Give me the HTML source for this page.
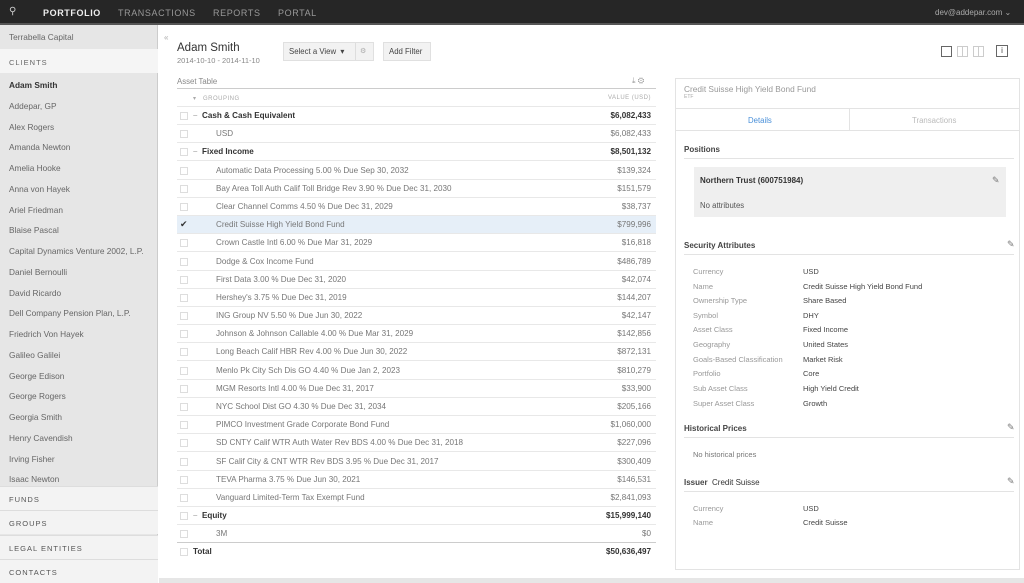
<!DOCTYPE html>
<html><head><meta charset="utf-8"><style>
*{box-sizing:border-box;margin:0;padding:0}
body{width:1024px;height:583px;overflow:hidden;font-family:"Liberation Sans",sans-serif;background:#fff;position:relative;color:#333}
.a{position:absolute;white-space:nowrap}
.nav{left:0;top:0;width:1024px;height:25px;background:#262626;border-bottom:2px solid #555}
.nav span{position:absolute;top:8px;font-size:9px;letter-spacing:.6px;color:#999}
.side{left:0;top:25px;width:158px;height:558px;background:#e6e6e6;border-right:1px solid #ccc}
.cl{left:9px;font-size:8.3px;color:#666}
.sec{left:0;width:158px;height:24px;background:#f3f3f3;border-top:1px solid #ddd;font-size:7.5px;letter-spacing:1px;color:#555;padding:8px 9px}
.row{left:177px;width:479px;height:18px;border-bottom:1px solid #e8e8e8;font-size:8.1px;color:#777}
.row .cb{position:absolute;left:3px;top:5px;width:8px;height:8px;border:1px solid #ddd;background:#fff}
.row .t{position:absolute;top:4px}
.row .v{position:absolute;right:5px;top:4px}
.b{font-weight:bold;color:#333}
.lbl{left:693px;font-size:7.5px;color:#999}
.val{left:803px;font-size:7.5px;color:#444}
.h{left:684px;font-size:8px;font-weight:bold;color:#444}
.hl{left:684px;width:330px;height:1px;background:#e3e3e3}
.pen{font-size:9px;color:#777}
</style></head><body>
<div class="a nav">
<span style="left:9px;top:6px;color:#ccc;font-size:10px">&#9906;</span>
<span style="left:43px;color:#eee;font-weight:bold">PORTFOLIO</span>
<span style="left:118px">TRANSACTIONS</span>
<span style="left:213px">REPORTS</span>
<span style="left:278px">PORTAL</span>
<span style="left:935px;letter-spacing:0;font-size:8px;color:#aaa">dev@addepar.com ⌄</span>
</div>
<div class="a side"></div>
<div class="a cl" style="top:32px">Terrabella Capital</div>
<div class="a" style="left:0;top:49px;width:158px;height:24px;background:#f5f5f5"></div>
<div class="a cl" style="top:58px;font-size:7.5px;letter-spacing:1px">CLIENTS</div>
<div class="a cl" style="top:80px;font-weight:bold;color:#333">Adam Smith</div>
<div class="a cl" style="top:101px">Addepar, GP</div>
<div class="a cl" style="top:122px">Alex Rogers</div>
<div class="a cl" style="top:142px">Amanda Newton</div>
<div class="a cl" style="top:163px">Amelia Hooke</div>
<div class="a cl" style="top:184px">Anna von Hayek</div>
<div class="a cl" style="top:205px">Ariel Friedman</div>
<div class="a cl" style="top:225px">Blaise Pascal</div>
<div class="a cl" style="top:246px">Capital Dynamics Venture 2002, L.P.</div>
<div class="a cl" style="top:267px">Daniel Bernoulli</div>
<div class="a cl" style="top:288px">David Ricardo</div>
<div class="a cl" style="top:308px">Dell Company Pension Plan, L.P.</div>
<div class="a cl" style="top:329px">Friedrich Von Hayek</div>
<div class="a cl" style="top:350px">Galileo Galilei</div>
<div class="a cl" style="top:371px">George Edison</div>
<div class="a cl" style="top:391px">George Rogers</div>
<div class="a cl" style="top:412px">Georgia Smith</div>
<div class="a cl" style="top:433px">Henry Cavendish</div>
<div class="a cl" style="top:454px">Irving Fisher</div>
<div class="a cl" style="top:474px">Isaac Newton</div>
<div class="a sec" style="top:486px">FUNDS</div>
<div class="a sec" style="top:510px">GROUPS</div>
<div class="a sec" style="top:535px">LEGAL ENTITIES</div>
<div class="a sec" style="top:559px;height:24px">CONTACTS</div>
<div class="a" style="left:159px;top:578px;width:865px;height:5px;background:#e6e6e6"></div>

<div class="a" style="left:164px;top:33px;font-size:8px;color:#aaa">«</div>
<div class="a" style="left:177px;top:42px;font-size:11.5px;color:#333">Adam Smith</div>
<div class="a" style="left:177px;top:56px;font-size:7.5px;color:#888">2014-10-10 - 2014-11-10</div>
<div class="a" style="left:283px;top:42px;width:91px;height:19px;background:#f2f2f2;border:1px solid #e0e0e0"></div>
<div class="a" style="left:289px;top:47px;font-size:7.8px;color:#444">Select a View &nbsp;▾</div>
<div class="a" style="left:355px;top:43px;width:1px;height:17px;background:#ddd"></div>
<div class="a" style="left:360px;top:47px;font-size:7px;color:#aaa">⚙</div>
<div class="a" style="left:383px;top:42px;width:48px;height:19px;background:#f2f2f2;border:1px solid #e0e0e0"></div>
<div class="a" style="left:389px;top:47px;font-size:7.8px;color:#444">Add Filter</div>
<div class="a" style="left:941px;top:46px;width:11px;height:11px;border:1.5px solid #666"></div>
<div class="a" style="left:957px;top:46px;width:11px;height:11px;border:1px solid #ccc;background:linear-gradient(90deg,transparent 4px,#ccc 4px,#ccc 5px,transparent 5px)"></div>
<div class="a" style="left:973px;top:46px;width:11px;height:11px;border:1px solid #ccc;background:linear-gradient(90deg,transparent 4px,#ccc 4px,#ccc 5px,transparent 5px)"></div>
<div class="a" style="left:996px;top:45px;width:12px;height:12px;border:1.5px solid #666;font-size:8px;text-align:center;line-height:9px;color:#444">i</div>

<div class="a" style="left:177px;top:77px;font-size:7.8px;color:#888">Asset Table</div>
<div class="a" style="left:632px;top:76px;font-size:8px;color:#999">⤓ ⚙</div>
<div class="a" style="left:177px;top:88px;width:479px;height:1px;background:#ccc"></div>
<div class="a row" style="top:89px;height:18px"><span class="t" style="left:16px;font-size:6px;color:#aaa;letter-spacing:.5px;top:6px">▾ &nbsp; GROUPING</span><span class="v" style="font-size:6px;color:#aaa;letter-spacing:.5px;top:6px">VALUE (USD)</span></div>
<div class="a row" style="top:107px"><span class="cb"></span><span class="t b" style="left:16px"><span style="color:#bbb">–</span> &nbsp;Cash &amp; Cash Equivalent</span><span class="v b">$6,082,433</span></div>
<div class="a row" style="top:125px"><span class="cb"></span><span class="t" style="left:39px">USD</span><span class="v">$6,082,433</span></div>
<div class="a row" style="top:143px"><span class="cb"></span><span class="t b" style="left:16px"><span style="color:#bbb">–</span> &nbsp;Fixed Income</span><span class="v b">$8,501,132</span></div>
<div class="a row" style="top:162px"><span class="cb"></span><span class="t" style="left:39px">Automatic Data Processing 5.00 % Due Sep 30, 2032</span><span class="v">$139,324</span></div>
<div class="a row" style="top:180px"><span class="cb"></span><span class="t" style="left:39px">Bay Area Toll Auth Calif Toll Bridge Rev 3.90 % Due Dec 31, 2030</span><span class="v">$151,579</span></div>
<div class="a row" style="top:198px"><span class="cb"></span><span class="t" style="left:39px">Clear Channel Comms 4.50 % Due Dec 31, 2029</span><span class="v">$38,737</span></div>
<div class="a row" style="top:216px;background:#e6eff8"><span class="t" style="left:3px;color:#333;top:3px;font-size:9px">✔</span><span class="t" style="left:39px">Credit Suisse High Yield Bond Fund</span><span class="v">$799,996</span></div>
<div class="a row" style="top:234px"><span class="cb"></span><span class="t" style="left:39px">Crown Castle Intl 6.00 % Due Mar 31, 2029</span><span class="v">$16,818</span></div>
<div class="a row" style="top:253px"><span class="cb"></span><span class="t" style="left:39px">Dodge &amp; Cox Income Fund</span><span class="v">$486,789</span></div>
<div class="a row" style="top:271px"><span class="cb"></span><span class="t" style="left:39px">First Data 3.00 % Due Dec 31, 2020</span><span class="v">$42,074</span></div>
<div class="a row" style="top:289px"><span class="cb"></span><span class="t" style="left:39px">Hershey's 3.75 % Due Dec 31, 2019</span><span class="v">$144,207</span></div>
<div class="a row" style="top:307px"><span class="cb"></span><span class="t" style="left:39px">ING Group NV 5.50 % Due Jun 30, 2022</span><span class="v">$42,147</span></div>
<div class="a row" style="top:325px"><span class="cb"></span><span class="t" style="left:39px">Johnson &amp; Johnson Callable 4.00 % Due Mar 31, 2029</span><span class="v">$142,856</span></div>
<div class="a row" style="top:343px"><span class="cb"></span><span class="t" style="left:39px">Long Beach Calif HBR Rev 4.00 % Due Jun 30, 2022</span><span class="v">$872,131</span></div>
<div class="a row" style="top:362px"><span class="cb"></span><span class="t" style="left:39px">Menlo Pk City Sch Dis GO 4.40 % Due Jan 2, 2023</span><span class="v">$810,279</span></div>
<div class="a row" style="top:380px"><span class="cb"></span><span class="t" style="left:39px">MGM Resorts Intl 4.00 % Due Dec 31, 2017</span><span class="v">$33,900</span></div>
<div class="a row" style="top:398px"><span class="cb"></span><span class="t" style="left:39px">NYC School Dist GO 4.30 % Due Dec 31, 2034</span><span class="v">$205,166</span></div>
<div class="a row" style="top:416px"><span class="cb"></span><span class="t" style="left:39px">PIMCO Investment Grade Corporate Bond Fund</span><span class="v">$1,060,000</span></div>
<div class="a row" style="top:434px"><span class="cb"></span><span class="t" style="left:39px">SD CNTY Calif WTR Auth Water Rev BDS 4.00 % Due Dec 31, 2018</span><span class="v">$227,096</span></div>
<div class="a row" style="top:453px"><span class="cb"></span><span class="t" style="left:39px">SF Calif City &amp; CNT WTR Rev BDS 3.95 % Due Dec 31, 2017</span><span class="v">$300,409</span></div>
<div class="a row" style="top:471px"><span class="cb"></span><span class="t" style="left:39px">TEVA Pharma 3.75 % Due Jun 30, 2021</span><span class="v">$146,531</span></div>
<div class="a row" style="top:489px"><span class="cb"></span><span class="t" style="left:39px">Vanguard Limited-Term Tax Exempt Fund</span><span class="v">$2,841,093</span></div>
<div class="a row" style="top:507px"><span class="cb"></span><span class="t b" style="left:16px"><span style="color:#bbb">–</span> &nbsp;Equity</span><span class="v b">$15,999,140</span></div>
<div class="a row" style="top:525px;border-bottom:1px solid #ccc"><span class="cb"></span><span class="t" style="left:39px">3M</span><span class="v">$0</span></div>
<div class="a row" style="top:543px;border:none"><span class="cb"></span><span class="t b" style="left:16px">Total</span><span class="v b">$50,636,497</span></div>

<div class="a" style="left:675px;top:78px;width:345px;height:492px;border:1px solid #e3e3e3"></div>
<div class="a" style="left:684px;top:84px;font-size:8.3px;color:#999">Credit Suisse High Yield Bond Fund</div>
<div class="a" style="left:684px;top:94px;font-size:5px;color:#aaa">ETF</div>
<div class="a" style="left:675px;top:108px;width:345px;height:23px;border-top:1px solid #e3e3e3;border-bottom:1px solid #e3e3e3"></div>
<div class="a" style="left:849px;top:109px;width:1px;height:21px;background:#e3e3e3"></div>
<div class="a" style="left:748px;top:116px;font-size:7.8px;color:#4a90d9">Details</div>
<div class="a" style="left:912px;top:116px;font-size:7.8px;color:#bbb">Transactions</div>
<div class="a h" style="top:145px">Positions</div>
<div class="a hl" style="top:158px"></div>
<div class="a" style="left:694px;top:167px;width:312px;height:50px;background:#efefef"></div>
<div class="a" style="left:700px;top:176px;font-size:8px;font-weight:bold;color:#333">Northern Trust (600751984)</div>
<div class="a pen" style="left:992px;top:175px">✎</div>
<div class="a" style="left:700px;top:201px;font-size:7.8px;color:#555">No attributes</div>
<div class="a h" style="top:241px">Security Attributes</div><div class="a pen" style="left:1007px;top:239px">✎</div>
<div class="a hl" style="top:254px"></div>
<div class="a lbl" style="top:267px">Currency</div><div class="a val" style="top:267px">USD</div>
<div class="a lbl" style="top:282px">Name</div><div class="a val" style="top:282px">Credit Suisse High Yield Bond Fund</div>
<div class="a lbl" style="top:296px">Ownership Type</div><div class="a val" style="top:296px">Share Based</div>
<div class="a lbl" style="top:311px">Symbol</div><div class="a val" style="top:311px">DHY</div>
<div class="a lbl" style="top:325px">Asset Class</div><div class="a val" style="top:325px">Fixed Income</div>
<div class="a lbl" style="top:340px">Geography</div><div class="a val" style="top:340px">United States</div>
<div class="a lbl" style="top:355px">Goals-Based Classification</div><div class="a val" style="top:355px">Market Risk</div>
<div class="a lbl" style="top:369px">Portfolio</div><div class="a val" style="top:369px">Core</div>
<div class="a lbl" style="top:384px">Sub Asset Class</div><div class="a val" style="top:384px">High Yield Credit</div>
<div class="a lbl" style="top:399px">Super Asset Class</div><div class="a val" style="top:399px">Growth</div>
<div class="a h" style="top:424px">Historical Prices</div><div class="a pen" style="left:1007px;top:422px">✎</div>
<div class="a hl" style="top:437px"></div>
<div class="a lbl" style="top:450px;color:#777">No historical prices</div>
<div class="a h" style="top:478px">Issuer &nbsp;<span style="font-weight:normal;color:#333">Credit Suisse</span></div><div class="a pen" style="left:1007px;top:476px">✎</div>
<div class="a hl" style="top:491px"></div>
<div class="a lbl" style="top:504px">Currency</div><div class="a val" style="top:504px">USD</div>
<div class="a lbl" style="top:518px">Name</div><div class="a val" style="top:518px">Credit Suisse</div>
</body></html>
